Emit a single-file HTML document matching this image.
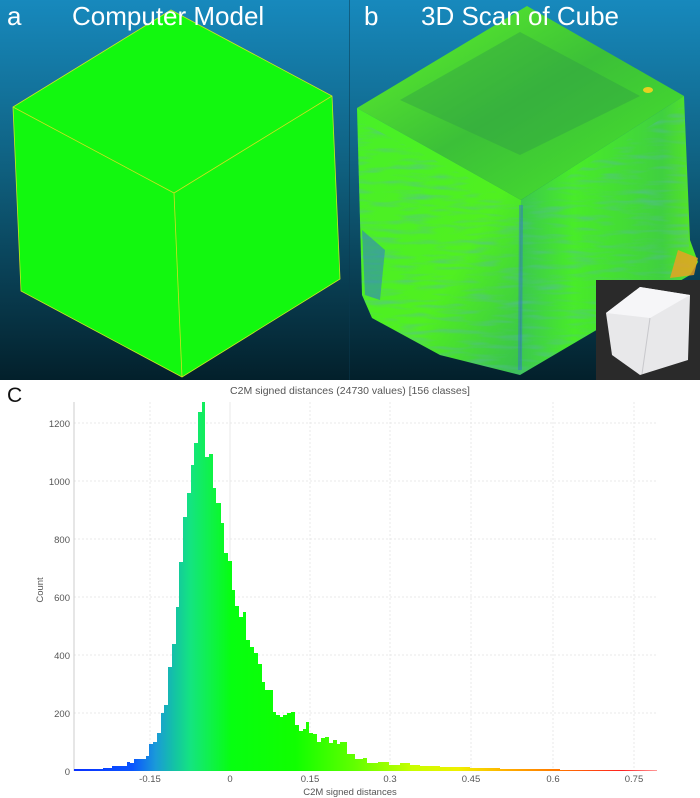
<!DOCTYPE html>
<html><head><meta charset="utf-8"><style>
html,body{margin:0;padding:0;background:#fff;}
body{width:700px;height:798px;position:relative;overflow:hidden;font-family:"Liberation Sans",sans-serif;}
.lbl{position:absolute;color:#fff;font-size:26px;font-family:"Liberation Sans",sans-serif;}
</style></head><body>
<svg width="700" height="798" style="position:absolute;left:0;top:0">
<defs>
<linearGradient id="bg" x1="0" y1="0" x2="0" y2="1">
<stop offset="0" stop-color="#1789bd"/><stop offset="0.45" stop-color="#0f5f7e"/><stop offset="1" stop-color="#03202b"/>
</linearGradient>
<linearGradient id="top" x1="0" y1="0" x2="1" y2="1">
<stop offset="0" stop-color="#60f828"/><stop offset="0.5" stop-color="#3cc038"/><stop offset="1" stop-color="#48e82a"/>
</linearGradient>
<linearGradient id="lf" x1="0" y1="0" x2="1" y2="1">
<stop offset="0" stop-color="#48f028"/><stop offset="0.6" stop-color="#50f020"/><stop offset="1" stop-color="#38c050"/>
</linearGradient>
<linearGradient id="rf" x1="0" y1="0" x2="1" y2="0">
<stop offset="0" stop-color="#3cc850"/><stop offset="0.3" stop-color="#48ec28"/><stop offset="0.8" stop-color="#40d040"/><stop offset="1" stop-color="#58ea20"/>
</linearGradient>
<filter id="tx"><feTurbulence type="fractalNoise" baseFrequency="0.03 0.2" numOctaves="2" seed="3"/><feColorMatrix values="0 0 0 0 0.1  0 0 0 0 0.45  0 0 0 0 0.45  0 0 0 1.1 -0.5"/><feComposite in2="SourceGraphic" operator="in"/></filter>
<linearGradient id="hg" gradientUnits="userSpaceOnUse" x1="74" y1="0" x2="657" y2="0">
<stop offset="0" stop-color="#0a30ff"/>
<stop offset="0.1" stop-color="#0a55ff"/>
<stop offset="0.14" stop-color="#1a9ad8"/>
<stop offset="0.17" stop-color="#14c0a8"/>
<stop offset="0.2" stop-color="#14e480"/>
<stop offset="0.23" stop-color="#10f050"/>
<stop offset="0.27" stop-color="#06ff10"/>
<stop offset="0.38" stop-color="#10ff00"/>
<stop offset="0.48" stop-color="#60ff00"/>
<stop offset="0.58" stop-color="#c8ff00"/>
<stop offset="0.66" stop-color="#f0f000"/>
<stop offset="0.74" stop-color="#ffb000"/>
<stop offset="0.84" stop-color="#ff7000"/>
<stop offset="0.94" stop-color="#ff2020"/>
<stop offset="1" stop-color="#ff9999"/>
</linearGradient>
</defs>
<rect x="0" y="0" width="700" height="380" fill="url(#bg)"/>
<line x1="349.5" y1="0" x2="349.5" y2="380" stroke="#0a3a50" stroke-width="1" opacity="0.5"/>
<polygon points="171,10 332,96 340,279 182,377 21,291 13,107" fill="#12f80f" stroke="#c8e820" stroke-width="0.8"/>
<polyline points="13,107 174,193 332,96" fill="none" stroke="#d0e020" stroke-width="0.8"/>
<line x1="174" y1="193" x2="182" y2="377" stroke="#d0e020" stroke-width="0.8"/>
<polygon points="357,108 527,6 684,96 521,200" fill="url(#top)"/>
<polygon points="400,100 520,32 640,96 520,155" fill="#2f9a45" opacity="0.4"/>
<polygon points="357,108 521,200 520,375 440,355 372,318 362,295" fill="url(#lf)"/>
<polygon points="521,200 684,96 690,240 698,262 690,275 520,375" fill="url(#rf)"/>
<g filter="url(#tx)"><polygon points="357,120 521,205 520,375 440,355 372,318 362,295" fill="#000"/><polygon points="521,205 684,105 690,275 520,375" fill="#000"/></g>
<polygon points="362,230 385,250 380,300 365,295" fill="#2a70d8" opacity="0.5"/>
<line x1="521" y1="205" x2="520" y2="370" stroke="#3070d0" stroke-width="4" opacity="0.45"/>
<polygon points="678,250 698,258 694,275 670,278" fill="#f0a020" opacity="0.8"/>
<ellipse cx="648" cy="90" rx="5" ry="3" fill="#e8d020"/>
<rect x="596" y="280" width="104" height="100" fill="#2a2a2a"/>
<polygon points="606,313 640,287 690,295 688,360 640,375 612,355" fill="#e8e8ea"/>
<polygon points="606,313 640,287 690,295 650,318" fill="#f6f6f8"/>
<line x1="650" y1="318" x2="642" y2="374" stroke="#c8c8cc" stroke-width="1"/>
<g stroke="#e8e8e8" stroke-dasharray="2,2" stroke-width="1">
<line x1="150" y1="402" x2="150" y2="771"/><line x1="230" y1="402" x2="230" y2="771" stroke-dasharray="none"/><line x1="310" y1="402" x2="310" y2="771"/><line x1="390" y1="402" x2="390" y2="771"/><line x1="471" y1="402" x2="471" y2="771"/><line x1="553" y1="402" x2="553" y2="771"/><line x1="634" y1="402" x2="634" y2="771"/>
<line x1="74" y1="423" x2="657" y2="423"/><line x1="74" y1="481" x2="657" y2="481"/><line x1="74" y1="539" x2="657" y2="539"/><line x1="74" y1="597" x2="657" y2="597"/><line x1="74" y1="655" x2="657" y2="655"/><line x1="74" y1="713" x2="657" y2="713"/>
</g>
<line x1="74" y1="402" x2="74" y2="771" stroke="#cccccc"/>
<path d="M74 771 V769 H103 V768 H112 V766 H127 V762 H130 V763 H134 V759 H146 V756 H149 V744 H153 V742 H157 V733 H161 V713 H164 V705 H168 V667 H172 V644 H176 V607 H179 V562 H183 V517 H187 V493 H191 V465 H194 V443 H198 V412 H202 V402 H205 V457 H209 V454 H213 V488 H216 V503 H221 V523 H224 V553 H228 V561 H232 V590 H235 V606 H239 V617 H243 V612 H246 V640 H250 V647 H254 V653 H258 V664 H262 V682 H265 V690 H273 V712 H276 V715 H280 V717 H283 V715 H287 V713 H291 V712 H295 V725 H299 V731 H303 V729 H306 V722 H309 V733 H313 V734 H317 V742 H321 V738 H325 V737 H329 V743 H333 V740 H337 V744 H340 V742 H347 V754 H355 V759 H363 V758 H367 V763 H378 V762 H389 V765 H400 V763 H410 V765 H420 V766 H440 V767 H470 V768 H500 V769 H560 V770 H657 V771 Z" fill="url(#hg)"/>
<g font-family="Liberation Sans,sans-serif" font-size="9.5" fill="#555" text-anchor="end">
<text x="70" y="775">0</text><text x="70" y="717">200</text><text x="70" y="659">400</text><text x="70" y="601">600</text><text x="70" y="543">800</text><text x="70" y="485">1000</text><text x="70" y="427">1200</text>
</g>
<g font-family="Liberation Sans,sans-serif" font-size="9.5" fill="#555" text-anchor="middle">
<text x="150" y="782">-0.15</text><text x="230" y="782">0</text><text x="310" y="782">0.15</text><text x="390" y="782">0.3</text><text x="471" y="782">0.45</text><text x="553" y="782">0.6</text><text x="634" y="782">0.75</text>
<text x="350" y="795">C2M signed distances</text>
<text x="350" y="394" font-size="10.5">C2M signed distances (24730 values)  [156 classes]</text>
<text x="0" y="0" transform="translate(43,590) rotate(-90)">Count</text>
</g>
<text x="7" y="402" font-family="Liberation Sans,sans-serif" font-size="21" fill="#111">C</text>
</svg>
<div class="lbl" style="left:7px;top:1px;">a</div>
<div class="lbl" style="left:72px;top:1px;">Computer Model</div>
<div class="lbl" style="left:364px;top:1px;">b</div>
<div class="lbl" style="left:421px;top:1px;">3D Scan of Cube</div>
</body></html>
